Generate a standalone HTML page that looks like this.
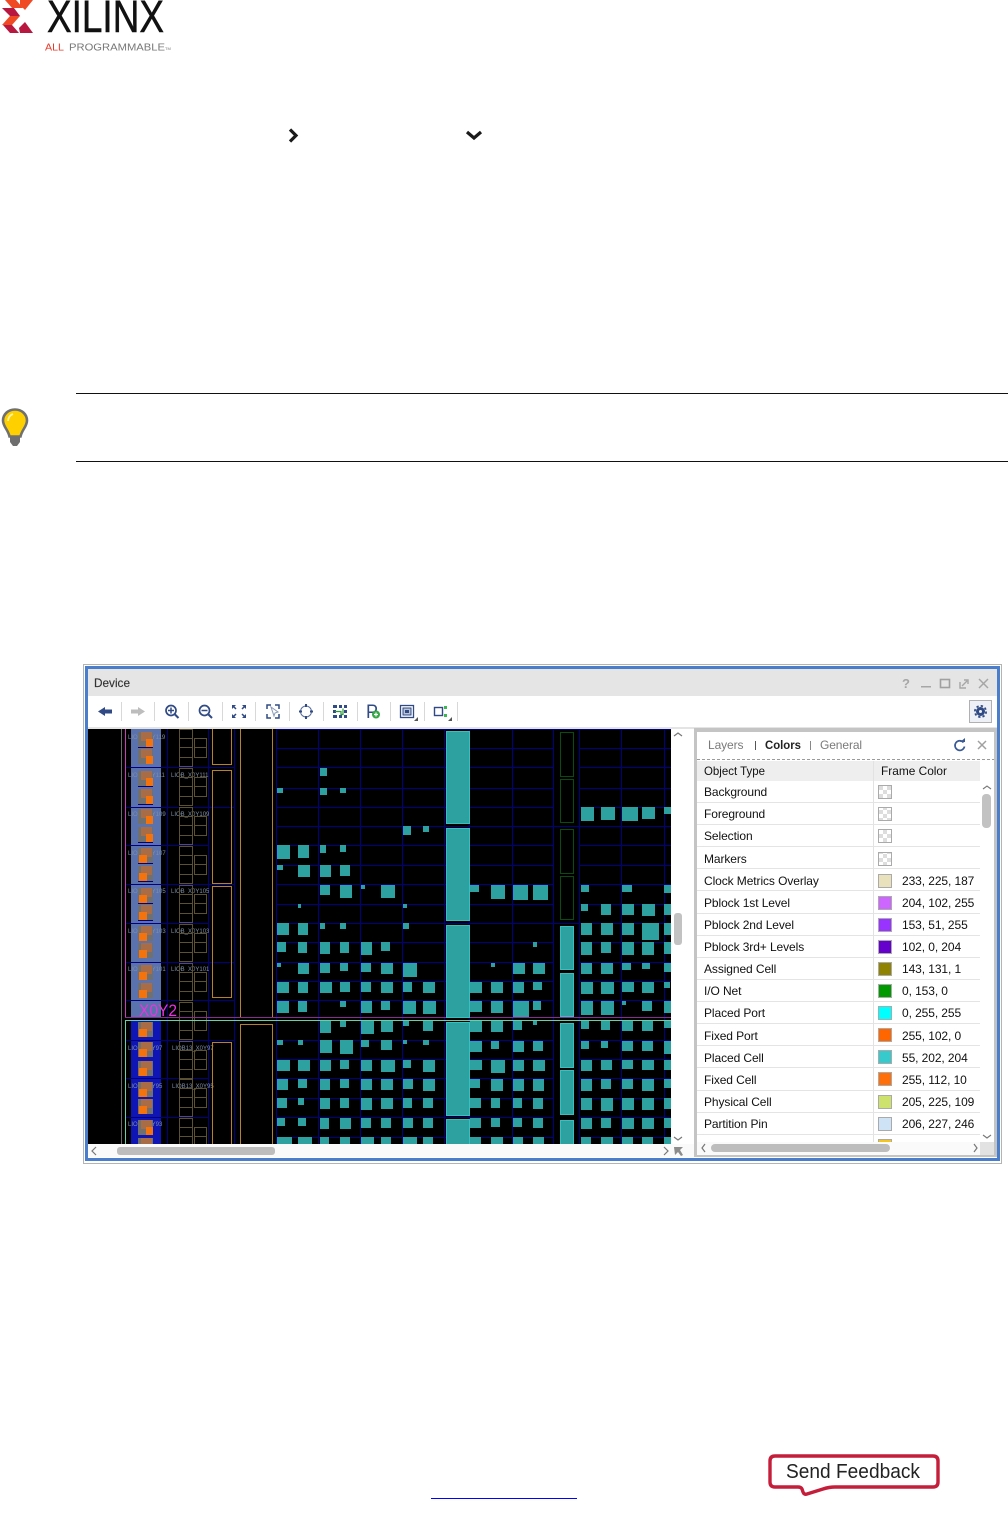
<!DOCTYPE html>
<html lang="en"><head><meta charset="utf-8"><title>Device Window Colors</title>
<style>html,body{margin:0;padding:0;background:#fff}svg{display:block}text{font-family:"Liberation Sans",sans-serif}.tb text{letter-spacing:-.09px}</style></head>
<body>
<svg width="1008" height="1526" viewBox="0 0 1008 1526" xmlns="http://www.w3.org/2000/svg">
<defs>
<clipPath id="dev"><rect x="88" y="729" width="583" height="415"/></clipPath>
<pattern id="chk" x="879" y="786" width="8" height="8" patternUnits="userSpaceOnUse"><rect width="8" height="8" fill="#fff"/><rect width="4" height="4" fill="#ddd"/><rect x="4" y="4" width="4" height="4" fill="#ddd"/></pattern>
<g id="t1"><rect x="138" width="15" height="15" fill="#707070"/><rect x="141" width="11" height="9" fill="#a86c46"/><rect x="146" y="7" width="7" height="8" fill="#f5730c"/></g>
<g id="t2"><rect x="138" width="15" height="15" fill="#707070"/><rect x="141" width="11" height="9" fill="#a86c46"/><rect x="139" y="7" width="8" height="8" fill="#f5730c"/></g>
<g id="b" fill="none" stroke="#5c5232"><rect x="179.500" y="0.500" width="13" height="9"/><rect x="179.500" y="9.500" width="13" height="9"/><rect x="179.500" y="18.500" width="13" height="10"/><rect x="179.500" y="28.500" width="13" height="9"/><rect x="194.500" y="9.500" width="12" height="9"/><rect x="194.500" y="18.500" width="12" height="10"/></g>
</defs>

<!-- logo -->
<polygon points="5,0 16,0 23,8 12,8" fill="#f04a25"/>
<polygon points="2,8 14,8 20,16 10,16" fill="#b8173f"/>
<polygon points="2,25 10,16 20,16 12,25" fill="#f04a25"/>
<polygon points="3,25 12,25 19,33 10,33" fill="#b8173f"/>
<polygon points="20,0 33,0 25,10 20,5" fill="#f04a25"/>
<polygon points="25,22 33,33 20,33 19,28" fill="#b8173f"/>
<text x="47" y="32" font-size="45" textLength="117" lengthAdjust="spacingAndGlyphs" fill="#111" stroke="#111" stroke-width=".5">XILINX</text>
<text x="45" y="50.500" font-size="10" textLength="19" lengthAdjust="spacingAndGlyphs" fill="#e8392a">ALL</text>
<text x="69" y="50.500" font-size="10" textLength="96" lengthAdjust="spacingAndGlyphs" fill="#777">PROGRAMMABLE</text>
<text x="165" y="50" font-size="4" fill="#777">TM</text>

<!-- chevrons -->
<path d="M290 129.500l6 6-6 6" fill="none" stroke="#1a1a1a" stroke-width="3.200"/>
<path d="M467 132l7 6 7-6" fill="none" stroke="#1a1a1a" stroke-width="3.200"/>

<!-- tip -->
<rect x="76" y="393" width="932" height="1" fill="#111"/>
<rect x="76" y="461" width="932" height="1" fill="#111"/>
<path d="M15 409.500c-7 0-12 5-12 11 0 6 5 9 6.500 16h11c1.500-7 6.500-10 6.500-16 0-6-5-11-12-11z" fill="#ffd000" stroke="#707070" stroke-width="2.600"/>
<path d="M10 437h10v5l-3 4h-4l-3-4z" fill="#6e6e6e"/>
<path d="M8 421c0-3 2-6 5-7" fill="none" stroke="#fff3a8" stroke-width="1.800"/>

<!-- window -->
<rect x="83.500" y="664.500" width="918" height="499" fill="#fff" stroke="#b4b4b4"/>
<rect x="86.500" y="667.500" width="912" height="492" fill="#fff" stroke="#4a7dcc" stroke-width="3"/>
<rect x="88" y="669" width="909" height="27" fill="#e5e5e5"/>
<text x="94" y="687" font-size="12" fill="#333" textLength="36" lengthAdjust="spacingAndGlyphs" stroke="#333" stroke-width=".15">Device</text>
<rect x="88" y="727" width="909" height="2" fill="#e4e4e4"/>

<!-- title controls -->
<text x="902" y="688" font-size="13" font-weight="bold" fill="#a6a6a6">?</text>
<rect x="921" y="686" width="10" height="1.500" fill="#a6a6a6"/>
<rect x="940.500" y="679.500" width="9" height="8" fill="none" stroke="#a0a0a0" stroke-width="1.600"/>
<path d="M960 682v6h6M964 680h4v4M962 686l5-5" fill="none" stroke="#a6a6a6" stroke-width="1.400"/>
<path d="M979 679l9 9M988 679l-9 9" fill="none" stroke="#a6a6a6" stroke-width="1.500"/>

<!-- toolbar separators -->
<g fill="#d8d8d8">
<rect x="121" y="702" width="1" height="19"/><rect x="154" y="702" width="1" height="19"/><rect x="188" y="702" width="1" height="19"/><rect x="222" y="702" width="1" height="19"/><rect x="255" y="702" width="1" height="19"/><rect x="289" y="702" width="1" height="19"/><rect x="323" y="702" width="1" height="19"/><rect x="357" y="702" width="1" height="19"/><rect x="390" y="702" width="1" height="19"/><rect x="424" y="702" width="1" height="19"/><rect x="457" y="702" width="1" height="19"/>
</g>
<!-- toolbar icons -->
<path d="M98 711.500l7-4.500v2.500h7v4h-7v2.500z" fill="#2f4a84"/>
<path d="M145 711.500l-7-4.500v2.500h-7v4h7v2.500z" fill="#bdbdbd"/>
<g fill="none" stroke="#2f4a84">
<circle cx="171" cy="710.500" r="5" stroke-width="1.700"/><path d="M168 710.500h6M171 707.500v6" stroke-width="1.500"/><path d="M175 714.500l3.500 3.500" stroke-width="2"/>
<circle cx="204.500" cy="710.500" r="5" stroke-width="1.700"/><path d="M201.500 710.500h6" stroke-width="1.500"/><path d="M208.500 714.500l3.500 3.500" stroke-width="2"/>
<path d="M233 706l3 3M245 706l-3 3M233 717l3-3M245 717l-3-3" stroke-width="1.500"/>
<path d="M267 709v-4h4M275 705h4v4M279 714v4h-4M271 718h-4v-4" stroke-width="1.500"/>
<path d="M271 707l7 5-3 1-1 3z" stroke-width="1" stroke="#8a9ab8"/>
<circle cx="306" cy="711.500" r="5.500" stroke-width="1" stroke="#5a6e9a"/>
</g>
<path d="M232 705h4l-4 4zM246 705h-4l4 4zM232 718h4l-4-4zM246 718h-4l4-4z" fill="#2f4a84"/>
<path d="M305 704h2v3h-2zM305 716h2v3h-2zM299 710.500h3v2h-3zM310 710.500h3v2h-3z" fill="#2f4a84"/>
<path d="M333 705h4v3h-4zM339 705h3v3h-3zM344 705h3v3h-3zM333 715h4v3h-4zM339 715h3v3h-3zM344 715h3v3h-3zM333 710h3v3h-3zM344 710h3v3h-3z" fill="#2f4a84"/>
<path d="M335 711.500h6v3h2v-6" fill="none" stroke="#2a9a3a" stroke-width="1.200"/>
<text x="366" y="718" font-size="19" fill="#2f4a84" textLength="12" lengthAdjust="spacingAndGlyphs">P</text>
<circle cx="376" cy="714.500" r="4" fill="#35a846"/><path d="M374 714.500h4M376 712.500v4" stroke="#fff" stroke-width="1.200"/>
<rect x="400.500" y="705.500" width="13" height="12" fill="none" stroke="#2f4a84" stroke-width="1.300"/>
<rect x="403" y="708" width="8" height="7" fill="#b9c4d8" stroke="#2f4a84"/><rect x="405" y="710" width="4" height="3" fill="#2f4a84"/>
<rect x="434.500" y="707.500" width="8" height="8" fill="#fff" stroke="#2f4a84" stroke-width="1.400"/>
<path d="M444 706h3v3h-3zM444 714h3v3h-3z" fill="#3cb850"/>
<path d="M418 717v4h-4zM452 717v4h-4z" fill="#555"/>

<!-- settings -->
<rect x="969.500" y="700.500" width="22" height="22" fill="#edf0f6" stroke="#b0b0b0"/>
<circle cx="980.500" cy="711.500" r="3" fill="none" stroke="#2f4a84" stroke-width="3"/>
<circle cx="980.500" cy="711.500" r="5.600" fill="none" stroke="#2f4a84" stroke-width="1.800" stroke-dasharray="2.300 2.100"/>

<!-- device view -->
<rect x="88" y="729" width="583" height="415" fill="#000"/>
<g clip-path="url(#dev)">
<rect x="131" y="729" width="30" height="288" fill="#5a72ae"/>
<rect x="131" y="1020" width="30" height="124" fill="#0f14b4"/>

<!-- grid -->
<g fill="#000080">
<rect x="167" y="729" width="1" height="415"/><rect x="208" y="729" width="1" height="415"/><rect x="234" y="729" width="1" height="415"/>
<rect x="276" y="729" width="1" height="415"/><rect x="318" y="729" width="1" height="415"/><rect x="360" y="729" width="1" height="415"/><rect x="402" y="729" width="1" height="415"/><rect x="444" y="729" width="1" height="415"/>
<rect x="469" y="729" width="1" height="415"/><rect x="512" y="729" width="1" height="415"/><rect x="553" y="729" width="1" height="415"/><rect x="579" y="729" width="1" height="415"/><rect x="621" y="729" width="1" height="415"/><rect x="664" y="729" width="1" height="415"/>
<rect x="277" y="729" width="394" height="1"/><rect x="277" y="748" width="276" height="1"/><rect x="579" y="748" width="92" height="1"/><rect x="277" y="767" width="276" height="1"/><rect x="579" y="767" width="92" height="1"/><rect x="277" y="788" width="276" height="1"/><rect x="579" y="788" width="92" height="1"/><rect x="277" y="807" width="276" height="1"/><rect x="579" y="807" width="92" height="1"/>
<rect x="277" y="826" width="394" height="1"/>
<rect x="277" y="845" width="276" height="1"/><rect x="579" y="845" width="92" height="1"/><rect x="277" y="865" width="276" height="1"/><rect x="579" y="865" width="92" height="1"/><rect x="277" y="884" width="276" height="1"/><rect x="579" y="884" width="92" height="1"/><rect x="277" y="904" width="276" height="1"/><rect x="579" y="904" width="92" height="1"/>
<rect x="277" y="923" width="394" height="1"/>
<rect x="277" y="942" width="276" height="1"/><rect x="579" y="942" width="92" height="1"/><rect x="277" y="962" width="276" height="1"/><rect x="579" y="962" width="92" height="1"/><rect x="277" y="981" width="276" height="1"/><rect x="579" y="981" width="92" height="1"/><rect x="277" y="1000" width="276" height="1"/><rect x="579" y="1000" width="92" height="1"/>
<rect x="277" y="1040" width="276" height="1"/><rect x="579" y="1040" width="92" height="1"/><rect x="277" y="1059" width="276" height="1"/><rect x="579" y="1059" width="92" height="1"/><rect x="277" y="1078" width="276" height="1"/><rect x="579" y="1078" width="92" height="1"/><rect x="277" y="1098" width="276" height="1"/><rect x="579" y="1098" width="92" height="1"/><rect x="277" y="1117" width="276" height="1"/><rect x="579" y="1117" width="92" height="1"/><rect x="277" y="1137" width="276" height="1"/><rect x="579" y="1137" width="92" height="1"/>
<rect x="125" y="767" width="109" height="1"/><rect x="125" y="807" width="109" height="1"/><rect x="125" y="845" width="84" height="1"/><rect x="125" y="884" width="109" height="1"/><rect x="125" y="923" width="84" height="1"/><rect x="125" y="962" width="109" height="1"/><rect x="125" y="1000" width="109" height="1"/><rect x="125" y="1040" width="109" height="1"/><rect x="125" y="1078" width="84" height="1"/><rect x="125" y="1117" width="84" height="1"/>
</g>

<!-- small labels -->
<g font-size="6" fill="#7f8fa8">
<text x="128" y="739">LIOL_X0Y119</text>
<text x="128" y="777">LIOL_X0Y111</text><text x="171" y="777">LIOB_X0Y111</text>
<text x="128" y="816">LIOL_X0Y109</text><text x="171" y="816">LIOB_X0Y109</text>
<text x="128" y="855">LIOL_X0Y107</text>
<text x="128" y="893">LIOL_X0Y105</text><text x="171" y="893">LIOB_X0Y105</text>
<text x="128" y="933">LIOL_X0Y103</text><text x="171" y="933">LIOB_X0Y103</text>
<text x="128" y="971">LIOL_X0Y101</text><text x="171" y="971">LIOB_X0Y101</text>
<text x="128" y="1050">LIOL_X0Y97</text><text x="172" y="1050">LIOB13_X0Y97</text>
<text x="128" y="1088">LIOL_X0Y95</text><text x="172" y="1088">LIOB13_X0Y95</text>
<text x="128" y="1126">LIOL_X0Y93</text>
</g>

<!-- tiles -->
<use href="#t1" y="732"/><use href="#t1" y="749"/><use href="#t1" y="771"/><use href="#t1" y="789"/><use href="#t1" y="809"/><use href="#t1" y="827"/>
<use href="#t2" y="848"/><use href="#t2" y="866"/><use href="#t2" y="888"/><use href="#t2" y="905"/><use href="#t2" y="926"/><use href="#t2" y="943"/><use href="#t2" y="965"/><use href="#t2" y="983"/><use href="#t2" y="1022"/><use href="#t2" y="1042"/><use href="#t2" y="1061"/><use href="#t2" y="1082"/><use href="#t2" y="1099"/><use href="#t1" y="1120"/><use href="#t2" y="1138"/>
<g fill="#000080"><rect x="138" y="747" width="15" height="1"/><rect x="138" y="786" width="15" height="1"/><rect x="138" y="804" width="15" height="1"/><rect x="138" y="842" width="15" height="1"/><rect x="138" y="863" width="15" height="1"/><rect x="138" y="881" width="15" height="1"/><rect x="138" y="903" width="15" height="1"/><rect x="138" y="920" width="15" height="1"/></g>

<!-- mid boxes -->
<use href="#b" y="729"/><use href="#b" y="768"/><use href="#b" y="807"/><use href="#b" y="846"/><use href="#b" y="885"/><use href="#b" y="924"/><use href="#b" y="963"/><use href="#b" y="1002"/><use href="#b" y="1041"/><use href="#b" y="1079"/><use href="#b" y="1118"/>

<!-- orange outlines -->
<g fill="none" stroke="#b5812a" stroke-width="1">
<rect x="212.500" y="720.500" width="19" height="44"/><rect x="212.500" y="770.500" width="19" height="113"/><rect x="212.500" y="886.500" width="19" height="111"/><rect x="212.500" y="1042.500" width="19" height="120"/>
<path d="M240.500 729v288M272.500 729v288"/><rect x="240.500" y="1024.500" width="32" height="130"/>
</g>

<!-- pblock lines -->
<rect x="121" y="729" width="1" height="415" fill="#6a6a6a"/>
<rect x="125" y="729" width="1" height="288" fill="#c83cb4"/>
<rect x="125" y="1017" width="546" height="1" fill="#8a2c90"/>
<rect x="125" y="1020" width="546" height="1" fill="#68d0a8"/>
<rect x="125" y="1020" width="1" height="124" fill="#68d0a8"/>

<!-- large blocks -->
<g fill="#2da0a0" stroke="#38c0c0" stroke-width="1">
<rect x="446.500" y="731.500" width="23" height="92"/><rect x="446.500" y="828.500" width="23" height="92"/><rect x="446.500" y="925.500" width="23" height="92"/><rect x="446.500" y="1022.500" width="23" height="93"/><rect x="446.500" y="1119.500" width="23" height="40"/>
<rect x="560.500" y="926.500" width="13" height="43"/><rect x="560.500" y="973.500" width="13" height="43"/><rect x="560.500" y="1023.500" width="13" height="44"/><rect x="560.500" y="1070.500" width="13" height="44"/><rect x="560.500" y="1120.500" width="13" height="40"/>
</g>
<g fill="none" stroke="#0d4a12" stroke-width="1"><rect x="560.500" y="732.500" width="13" height="44"/><rect x="560.500" y="779.500" width="13" height="43"/><rect x="560.500" y="829.500" width="13" height="44"/><rect x="560.500" y="876.500" width="13" height="43"/></g>

<!-- cells -->
<path fill="#2da0a0" d="
M320 768h7v8h-7zM277 788h6v5h-6zM320 788h7v7h-7zM340 788h6v5h-6z
M581 807h13v14h-13zM601 807h14v13h-14zM622 807h16v14h-16zM642 807h13v12h-13zM664 807h7v7h-7z
M403 826h8v9h-8zM423 826h6v6h-6z
M277 845h13v14h-13zM298 845h11v13h-11zM320 845h6v8h-6zM340 845h6v7h-6z
M277 865h6v5h-6zM298 865h12v12h-12zM320 865h11v12h-11zM340 865h10v11h-10z
M320 885h10v10h-10zM340 885h12v13h-12zM361 885h4v4h-4zM381 885h14v13h-14zM470 885h9v7h-9zM491 885h14v14h-14zM513 885h15v15h-15zM533 885h15v15h-15zM581 885h8v7h-8zM622 885h10v7h-10zM664 885h7v8h-7z
M298 904h3v4h-3zM403 904h4v4h-4zM581 904h7v7h-7zM601 904h10v11h-10zM622 904h12v11h-12zM642 904h13v12h-13zM664 904h7v11h-7z
M277 923h12v12h-12zM298 923h10v12h-10zM320 923h5v6h-5zM340 923h6v6h-6zM403 923h6v6h-6zM581 923h11v12h-11zM601 923h12v12h-12zM622 923h12v12h-12zM642 923h17v17h-17zM664 923h7v12h-7z
M277 942h9v10h-9zM298 942h9v11h-9zM320 942h10v12h-10zM340 942h9v11h-9zM361 942h11v13h-11zM381 942h9v9h-9zM533 942h4v5h-4zM581 942h11v13h-11zM601 942h10v11h-10zM622 942h12v13h-12zM642 942h12v13h-12zM664 942h7v12h-7z
M277 963h4v4h-4zM298 963h11v11h-11zM320 963h10v10h-10zM340 963h8v8h-8zM361 963h10v9h-10zM381 963h12v11h-12zM403 963h14v14h-14zM491 963h4v4h-4zM513 963h12v11h-12zM533 963h12v11h-12zM581 963h11v11h-11zM601 963h12v11h-12zM622 963h9v7h-9zM642 963h8v6h-8zM664 963h7v9h-7z
M277 982h12v11h-12zM298 982h10v11h-10zM320 982h12v11h-12zM340 982h10v10h-10zM361 982h10v10h-10zM381 982h12v11h-12zM403 982h9v10h-9zM423 982h12v11h-12zM470 982h12v11h-12zM491 982h12v11h-12zM513 982h11v11h-11zM533 982h9v8h-9zM581 982h12v12h-12zM601 982h13v12h-13zM622 982h12v10h-12zM642 982h12v11h-12zM664 982h6v6h-6z
M277 1001h12v12h-12zM298 1001h9v11h-9zM340 1001h6v6h-6zM361 1001h11v12h-11zM381 1001h9v9h-9zM403 1001h13v13h-13zM423 1001h13v13h-13zM470 1001h12v11h-12zM491 1001h12v12h-12zM513 1001h16v16h-16zM533 1001h8v9h-8zM581 1001h12v14h-12zM601 1001h13v14h-13zM622 1001h4v4h-4zM642 1001h10v10h-10zM664 1001h7v12h-7z
M320 1021h11v12h-11zM340 1021h6v6h-6zM361 1021h13v13h-13zM381 1021h12v11h-12zM403 1021h6v5h-6zM423 1021h10v10h-10zM470 1021h12v11h-12zM491 1021h12v11h-12zM513 1021h9v9h-9zM533 1021h4v4h-4zM581 1021h8v8h-8zM601 1021h9v9h-9zM622 1021h11v10h-11zM642 1021h11v10h-11zM664 1021h7v7h-7z
M277 1040h6v5h-6zM298 1040h5v5h-5zM320 1040h12v13h-12zM340 1040h13v14h-13zM361 1040h8v7h-8zM381 1040h11v10h-11zM403 1040h4v4h-4zM423 1040h6v5h-6zM470 1041h12v11h-12zM491 1041h8v8h-8zM513 1041h11v11h-11zM533 1041h10v10h-10zM581 1041h8v8h-8zM601 1041h7v7h-7zM622 1041h11v10h-11zM642 1041h11v10h-11zM664 1041h7v13h-7z
M277 1060h13v11h-13zM298 1060h12v11h-12zM320 1060h11v11h-11zM340 1060h9v9h-9zM361 1060h11v11h-11zM381 1060h14v12h-14zM403 1060h8v8h-8zM423 1060h12v12h-12zM470 1060h12v10h-12zM491 1060h14v13h-14zM513 1060h11v11h-11zM533 1060h12v11h-12zM581 1060h11v11h-11zM601 1060h11v10h-11zM622 1060h11v9h-11zM642 1060h12v10h-12zM664 1060h7v10h-7z
M277 1079h11v11h-11zM298 1079h9v9h-9zM320 1079h10v11h-10zM340 1079h9v9h-9zM361 1079h11v11h-11zM381 1079h12v11h-12zM403 1079h10v10h-10zM423 1079h12v12h-12zM470 1079h10v9h-10zM491 1079h12v12h-12zM513 1079h11v12h-11zM533 1079h11v12h-11zM581 1079h11v12h-11zM601 1079h10v10h-10zM622 1079h11v10h-11zM642 1079h12v12h-12zM664 1079h7v9h-7z
M277 1098h10v10h-10zM298 1098h6v7h-6zM320 1098h10v11h-10zM340 1098h9v10h-9zM361 1098h11v12h-11zM381 1098h12v11h-12zM403 1098h9v10h-9zM423 1098h10v10h-10zM470 1098h11v10h-11zM491 1098h9v10h-9zM513 1098h9v10h-9zM533 1098h10v11h-10zM581 1098h11v12h-11zM601 1098h12v13h-12zM622 1098h12v12h-12zM642 1098h12v12h-12zM664 1098h7v11h-7z
M277 1118h8v8h-8zM298 1118h8v8h-8zM320 1118h9v11h-9zM340 1118h11v11h-11zM361 1118h10v10h-10zM381 1118h10v10h-10zM403 1118h10v10h-10zM423 1118h10v10h-10zM470 1118h11v10h-11zM491 1118h9v9h-9zM513 1118h9v9h-9zM533 1118h10v10h-10zM581 1118h11v11h-11zM601 1118h10v10h-10zM622 1118h12v11h-12zM642 1118h12v11h-12zM664 1118h7v10h-7z
M277 1137h15v7h-15zM298 1137h14v7h-14zM320 1137h9v7h-9zM340 1137h10v7h-10zM361 1137h13v7h-13zM381 1137h10v7h-10zM403 1137h14v7h-14zM423 1137h10v7h-10zM470 1137h11v7h-11zM491 1137h12v7h-12zM513 1137h10v7h-10zM533 1137h11v7h-11zM581 1137h10v7h-10zM601 1137h12v7h-12zM622 1137h11v7h-11zM642 1137h11v7h-11zM664 1137h7v7h-7z"/>
<text x="139" y="1016" font-size="16.500" fill="#e636dc" textLength="38" lengthAdjust="spacingAndGlyphs">X0Y2</text>
</g>

<!-- device scrollbars -->
<rect x="88" y="1144" width="606" height="13" fill="#fafafa"/>
<rect x="117" y="1147" width="158" height="8" rx="3" fill="#bdbdbd"/>
<rect x="674" y="913" width="8" height="32" rx="3" fill="#c2c2c2"/>
<path d="M96 1147l-4 4 4 4M664 1147l4 4-4 4M674 736l4-3 4 3M674 1137l4 3 4-3" fill="none" stroke="#777" stroke-width="1.200"/>
<path d="M674 1147h9l-3 3 3 5-2 1-3-4-3 3z" fill="#8c8c8c"/>

<!-- right panel -->
<rect x="694" y="728" width="303" height="429" fill="#c4c4c4"/>
<rect x="697" y="732" width="297" height="423" fill="#fff"/>
<text x="708" y="749" font-size="12" fill="#7a7a7a" letter-spacing="-.1">Layers</text>
<rect x="755" y="741" width="1" height="9" fill="#555"/>
<text x="765" y="749" font-size="12" font-weight="bold" fill="#222" textLength="36" lengthAdjust="spacingAndGlyphs">Colors</text>
<rect x="810" y="741" width="1" height="9" fill="#888"/>
<text x="820" y="749" font-size="12" fill="#7a7a7a" letter-spacing="-.1">General</text>
<path d="M963.500 742.500a4.800 4.800 0 1 0 1 4" fill="none" stroke="#3a5a96" stroke-width="1.700"/><path d="M960 742h5v-4z" fill="#3a5a96"/>
<path d="M978 741l8 8M986 741l-8 8" fill="none" stroke="#a0a0a0" stroke-width="1.500"/>
<path d="M697 759.500h297" stroke="#9a9a9a" stroke-dasharray="3 2"/>
<rect x="697" y="761" width="283" height="20" fill="#eeeeee"/>
<text x="704" y="775" font-size="12" fill="#111" textLength="61" lengthAdjust="spacingAndGlyphs">Object Type</text>
<text x="881" y="775" font-size="12" fill="#111" textLength="66" lengthAdjust="spacingAndGlyphs">Frame Color</text>
<rect x="873" y="761" width="1" height="381" fill="#e2e2e2"/>
<g fill="#e4e4e4">
<rect x="697" y="802" width="283" height="1"/><rect x="697" y="824" width="283" height="1"/><rect x="697" y="846" width="283" height="1"/><rect x="697" y="868" width="283" height="1"/><rect x="697" y="890" width="283" height="1"/><rect x="697" y="913" width="283" height="1"/><rect x="697" y="935" width="283" height="1"/><rect x="697" y="957" width="283" height="1"/><rect x="697" y="979" width="283" height="1"/><rect x="697" y="1001" width="283" height="1"/><rect x="697" y="1023" width="283" height="1"/><rect x="697" y="1045" width="283" height="1"/><rect x="697" y="1067" width="283" height="1"/><rect x="697" y="1090" width="283" height="1"/><rect x="697" y="1112" width="283" height="1"/><rect x="697" y="1134" width="283" height="1"/>
</g>
<g class="tb" font-size="12" fill="#111">
<text x="704" y="796">Background</text><text x="704" y="818">Foreground</text><text x="704" y="840">Selection</text><text x="704" y="863">Markers</text>
<text x="704" y="885">Clock Metrics Overlay</text><text x="902" y="885">233, 225, 187</text>
<text x="704" y="907">Pblock 1st Level</text><text x="902" y="907">204, 102, 255</text>
<text x="704" y="929">Pblock 2nd Level</text><text x="902" y="929">153, 51, 255</text>
<text x="704" y="951">Pblock 3rd+ Levels</text><text x="902" y="951">102, 0, 204</text>
<text x="704" y="973">Assigned Cell</text><text x="902" y="973">143, 131, 1</text>
<text x="704" y="995">I/O Net</text><text x="902" y="995">0, 153, 0</text>
<text x="704" y="1017">Placed Port</text><text x="902" y="1017">0, 255, 255</text>
<text x="704" y="1040">Fixed Port</text><text x="902" y="1040">255, 102, 0</text>
<text x="704" y="1062">Placed Cell</text><text x="902" y="1062">55, 202, 204</text>
<text x="704" y="1084">Fixed Cell</text><text x="902" y="1084">255, 112, 10</text>
<text x="704" y="1106">Physical Cell</text><text x="902" y="1106">205, 225, 109</text>
<text x="704" y="1128">Partition Pin</text><text x="902" y="1128">206, 227, 246</text>
</g>
<g stroke="#aaaaaa" stroke-width="1">
<rect x="878.500" y="785.500" width="13" height="13" fill="url(#chk)"/><rect x="878.500" y="807.500" width="13" height="13" fill="url(#chk)"/><rect x="878.500" y="829.500" width="13" height="13" fill="url(#chk)"/><rect x="878.500" y="852.500" width="13" height="13" fill="url(#chk)"/>
<rect x="878.500" y="874.500" width="13" height="13" fill="#e9e1bb"/><rect x="878.500" y="896.500" width="13" height="13" fill="#cc66ff"/><rect x="878.500" y="918.500" width="13" height="13" fill="#9933ff"/><rect x="878.500" y="940.500" width="13" height="13" fill="#6600cc"/><rect x="878.500" y="962.500" width="13" height="13" fill="#8f8301"/><rect x="878.500" y="984.500" width="13" height="13" fill="#009900"/><rect x="878.500" y="1006.500" width="13" height="13" fill="#00ffff"/><rect x="878.500" y="1028.500" width="13" height="13" fill="#ff6600"/><rect x="878.500" y="1050.500" width="13" height="13" fill="#37cacc"/><rect x="878.500" y="1072.500" width="13" height="13" fill="#ff700a"/><rect x="878.500" y="1095.500" width="13" height="13" fill="#cde16d"/><rect x="878.500" y="1117.500" width="13" height="13" fill="#cee3f6"/>
<rect x="878.500" y="1139.500" width="13" height="13" fill="#f5c518"/>
</g>
<!-- panel scrollbars -->
<rect x="982" y="794" width="9" height="34" rx="4" fill="#c2c2c2"/>
<path d="M983 789l4-3 4 3M983 1135l4 3 4-3" fill="none" stroke="#777" stroke-width="1.100"/>
<rect x="697" y="1142" width="283" height="13" fill="#fafafa"/>
<rect x="980" y="1142" width="14" height="13" fill="#e2e2e2"/>
<rect x="711" y="1144" width="179" height="8" rx="4" fill="#bdbdbd"/>
<path d="M705 1144l-3 4 3 4M974 1144l3 4-3 4" fill="none" stroke="#777" stroke-width="1.200"/>

<!-- footer -->
<rect x="431" y="1498" width="146" height="1" fill="#0000ff"/>
<path d="M775 1456h158q5 0 5 5v21q0 5-5 5H835q-6 0-12 2l-16 5q-3 1-4-2l-1-3q-1-2-4-2h-23q-5 0-5-5v-21q0-5 5-5z" fill="#fff" stroke="#c41e3a" stroke-width="3.400"/>
<text x="786" y="1478" font-size="20" fill="#222" textLength="134" lengthAdjust="spacingAndGlyphs">Send Feedback</text>
</svg>
</body></html>
